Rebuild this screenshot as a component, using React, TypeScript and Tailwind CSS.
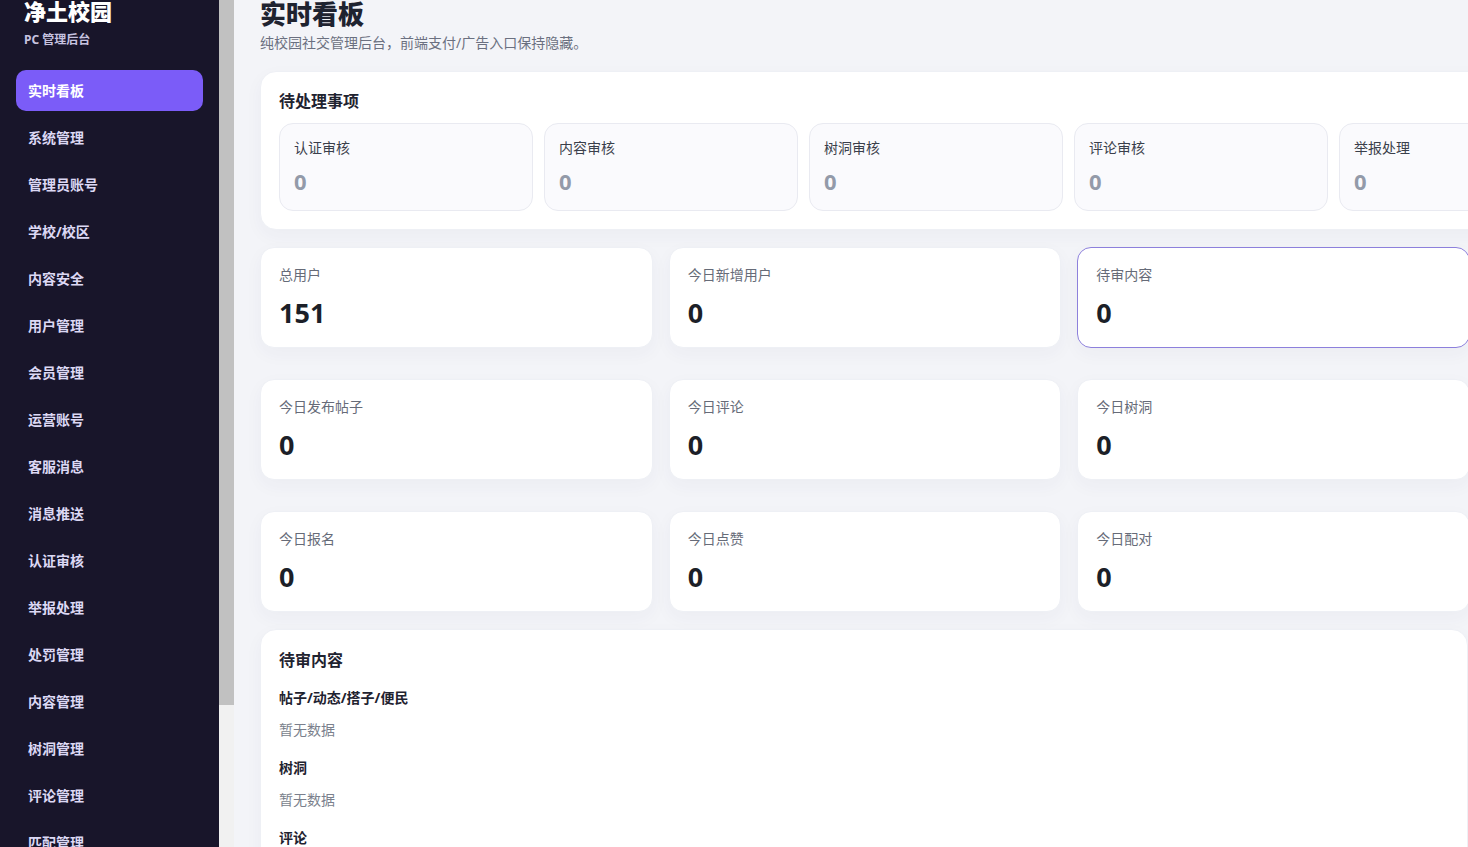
import { useLayoutEffect, useRef } from 'react'

const navItems = [
  '实时看板',
  '系统管理',
  '管理员账号',
  '学校/校区',
  '内容安全',
  '用户管理',
  '会员管理',
  '运营账号',
  '客服消息',
  '消息推送',
  '认证审核',
  '举报处理',
  '处罚管理',
  '内容管理',
  '树洞管理',
  '评论管理',
  '匹配管理',
  '活动管理',
  '公告管理',
  '操作日志',
]

const pending = [
  { label: '认证审核', value: 0 },
  { label: '内容审核', value: 0 },
  { label: '树洞审核', value: 0 },
  { label: '评论审核', value: 0 },
  { label: '举报处理', value: 0 },
]

const stats = [
  { label: '总用户', value: 151 },
  { label: '今日新增用户', value: 0 },
  { label: '待审内容', value: 0, active: true },
  { label: '今日发布帖子', value: 0 },
  { label: '今日评论', value: 0 },
  { label: '今日树洞', value: 0 },
  { label: '今日报名', value: 0 },
  { label: '今日点赞', value: 0 },
  { label: '今日配对', value: 0 },
]

const queues = ['帖子/动态/搭子/便民', '树洞', '评论', '举报']

function Sidebar() {
  return (
    <div className="flex shrink-0 h-screen">
      <aside className="w-[219px] h-screen overflow-hidden bg-[#18152a]">
        <div className="px-6">
          <div className="text-[22px] leading-none font-extrabold text-white">净土校园</div>
          <div className="mt-[10px] text-[12px] leading-4 font-bold text-[#c7c3e0]">PC 管理后台</div>
        </div>
        <nav className="mt-[22px] px-4 pb-4 flex flex-col gap-[6px]">
          {navItems.map((item, i) => (
            <div
              key={item}
              className={
                i === 0
                  ? 'h-[41px] shrink-0 flex items-center px-3 rounded-[10px] bg-[#7b5cf8] text-white text-[14px] font-bold'
                  : 'h-[41px] shrink-0 flex items-center px-3 rounded-[10px] text-[#dcd8f4] text-[14px] font-bold'
              }
            >
              {item}
            </div>
          ))}
        </nav>
      </aside>
      {/* sidebar scroll track */}
      <div className="w-[15px] h-screen bg-[#f1f1f1]">
        <div className="h-[705px] bg-[#c1c1c1]" />
      </div>
    </div>
  )
}

export default function App() {
  const mainRef = useRef<HTMLDivElement>(null)

  // dashboard opens slightly scrolled, header partly out of view
  useLayoutEffect(() => {
    if (mainRef.current) mainRef.current.scrollTop = 27
  }, [])

  return (
    <div
      className="flex h-screen overflow-hidden text-[#1f2330]"
      style={{ fontFamily: '"Noto Sans", "Noto Sans CJK SC", sans-serif' }}
    >
      <Sidebar />

      <main
        ref={mainRef}
        className="flex-1 h-screen overflow-auto bg-[#f3f4f8] pl-[26px] pt-6 pb-10 [scrollbar-width:none]"
      >
        <h1 className="text-[26px] leading-[34px] font-extrabold">实时看板</h1>
        <p className="mt-[2px] text-[14px] leading-5 text-[#6b7080]">
          纯校园社交管理后台，前端支付/广告入口保持隐藏。
        </p>

        {/* pending work */}
        <section className="mt-[18px] w-max min-w-full bg-white rounded-[16px] border border-[#eef0f5] shadow-[0_6px_18px_rgba(40,40,90,0.04)] px-[18px] pt-[17px] pb-[18px]">
          <h2 className="text-[16px] leading-6 font-bold">待处理事项</h2>
          <div className="mt-[10px] grid grid-cols-[repeat(5,254px)] gap-[11px]">
            {pending.map((p) => (
              <div
                key={p.label}
                className="h-[88px] rounded-[14px] border border-[#e9eaf1] bg-[#fafafd] px-[14px] pt-[14px]"
              >
                <div className="text-[14px] leading-5 text-[#3a3f4b]">{p.label}</div>
                <div className="mt-[9px] text-[22px] leading-7 font-bold text-[#939aa9]">{p.value}</div>
              </div>
            ))}
          </div>
        </section>

        {/* counters */}
        <div className="mt-[17px] mr-[-2px] grid grid-cols-3 gap-x-4 gap-y-[31px]">
          {stats.map((s) => (
            <div
              key={s.label}
              className={
                s.active
                  ? 'h-[101px] rounded-[14px] bg-white border border-[#8d80dc] px-[18px] pt-[17px] shadow-[0_6px_18px_rgba(40,40,90,0.04)]'
                  : 'h-[101px] rounded-[14px] bg-white border border-[#eef0f5] px-[18px] pt-[17px] shadow-[0_6px_18px_rgba(40,40,90,0.04)]'
              }
            >
              <div className="text-[14px] leading-5 text-[#666b78]">{s.label}</div>
              <div className="mt-[11px] text-[27px] leading-[34px] font-bold text-[#1c1f28]">{s.value}</div>
            </div>
          ))}
        </div>

        {/* review queue */}
        <section className="mt-[17px] bg-white rounded-[16px] border border-[#eef0f5] shadow-[0_6px_18px_rgba(40,40,90,0.04)] px-[18px] pt-[17px] pb-6">
          <h2 className="text-[16px] leading-[26px] font-bold">待审内容</h2>
          {queues.map((q, i) => (
            <div key={q} className={i === 0 ? 'mt-[15px]' : 'mt-[18px]'}>
              <h3 className="text-[14px] leading-5 font-bold text-[#1f2330]">{q}</h3>
              <p className="mt-3 text-[14px] leading-5 text-[#7a7f8c]">暂无数据</p>
            </div>
          ))}
        </section>
      </main>
    </div>
  )
}
